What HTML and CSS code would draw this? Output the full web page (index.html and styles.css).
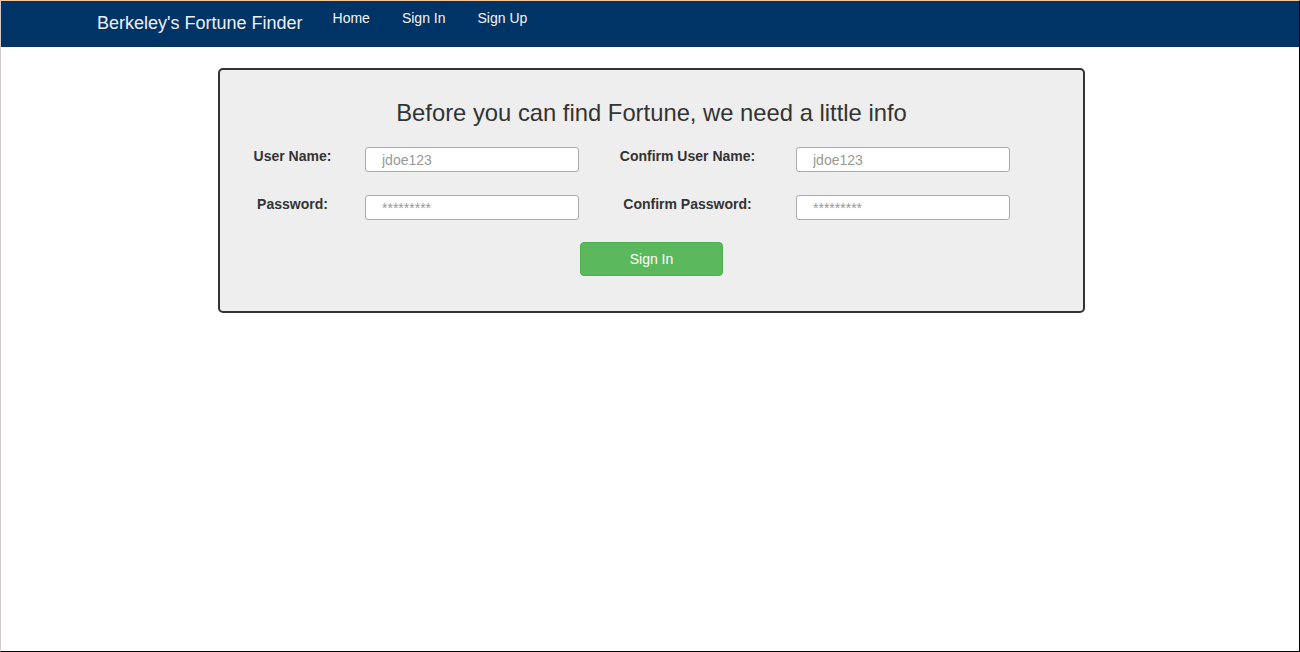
FILE: index.html
```html
<!DOCTYPE html>
<html lang="en">
<head>
<meta charset="utf-8">
<title>Berkeley's Fortune Finder</title>
<link rel="stylesheet" href="styles.css">
</head>
<body>
<div class="frame">
  <nav class="navbar">
    <a class="brand" href="#">Berkeley's Fortune Finder</a>
    <ul class="nav-links">
      <li><a href="#">Home</a></li>
      <li><a href="#">Sign In</a></li>
      <li><a href="#">Sign Up</a></li>
    </ul>
  </nav>
  <main class="main">
    <section class="card">
      <h3 class="card-title">Before you can find Fortune, we need a little info</h3>
      <form class="form-grid">
        <label class="form-label" for="user">User Name:</label>
        <input class="form-input" id="user" type="text" placeholder="jdoe123">
        <label class="form-label" for="user2">Confirm User Name:</label>
        <input class="form-input" id="user2" type="text" placeholder="jdoe123">
        <label class="form-label" for="pass">Password:</label>
        <input class="form-input pw" id="pass" type="password" placeholder="*********">
        <label class="form-label" for="pass2">Confirm Password:</label>
        <input class="form-input pw" id="pass2" type="password" placeholder="*********">
      </form>
      <div class="actions">
        <button class="btn-success" type="button">Sign In</button>
      </div>
    </section>
  </main>
</div>
</body>
</html>
```

FILE: styles.css
```css
* { box-sizing: border-box; }
html, body { margin: 0; padding: 0; }
body {
  font-family: "Liberation Sans", Arial, sans-serif;
  font-size: 14px;
  line-height: 20px;
  color: #333;
  background: #fff;
}
.frame {
  height: 652px;
  border-top: 1px solid #f3c79b;
  border-left: 1px solid #d4cccc;
  border-right: 1px solid #000;
  border-bottom: 1px solid #000;
  overflow: hidden;
}
.navbar {
  display: flex;
  align-items: flex-start;
  height: 46px;
  background: #003466;
  padding-left: 96px;
}
.brand {
  font-size: 18px;
  line-height: 20px;
  color: #eef0f8;
  text-decoration: none;
  padding-top: 12px;
  margin-right: 14px;
}
.nav-links {
  display: flex;
  list-style: none;
  margin: 0;
  padding: 7px 0 0;
}
.nav-links a {
  display: block;
  padding: 0 16px;
  color: #f4f4f4;
  text-decoration: none;
  font-size: 14px;
  line-height: 20px;
}
.main {
  padding-top: 21px;
  padding-left: 217px;
}
.card {
  width: 867px;
  background: #eee;
  border: 2px solid #333;
  border-radius: 5px;
  padding: 30px 0 35px;
}
.card-title {
  margin: 0;
  text-align: center;
  font-size: 23.8px;
  font-weight: normal;
  line-height: 26px;
  color: #333;
}
.form-grid {
  display: grid;
  grid-template-columns: 145px 214px 217px 214px;
  grid-auto-rows: 25px;
  row-gap: 23px;
  margin-top: 21px;
}
.form-label {
  font-weight: bold;
  text-align: center;
  line-height: 20px;
  margin-top: -1px;
}
.form-input {
  height: 25px;
  width: 214px;
  border: 1px solid #aaa;
  border-radius: 3px;
  background: #fff;
  padding: 0 0 0 16px;
  font-family: "Liberation Sans", Arial, sans-serif;
  font-size: 14px;
  color: #555;
}
.form-input::placeholder { color: #999; }
.actions {
  display: flex;
  justify-content: center;
  margin-top: 22px;
}
.btn-success {
  width: 143px;
  height: 34px;
  background: #5cb85c;
  border: 1px solid #4cae4c;
  border-radius: 4px;
  color: #fff;
  font-family: "Liberation Sans", Arial, sans-serif;
  font-size: 14px;
}
```
